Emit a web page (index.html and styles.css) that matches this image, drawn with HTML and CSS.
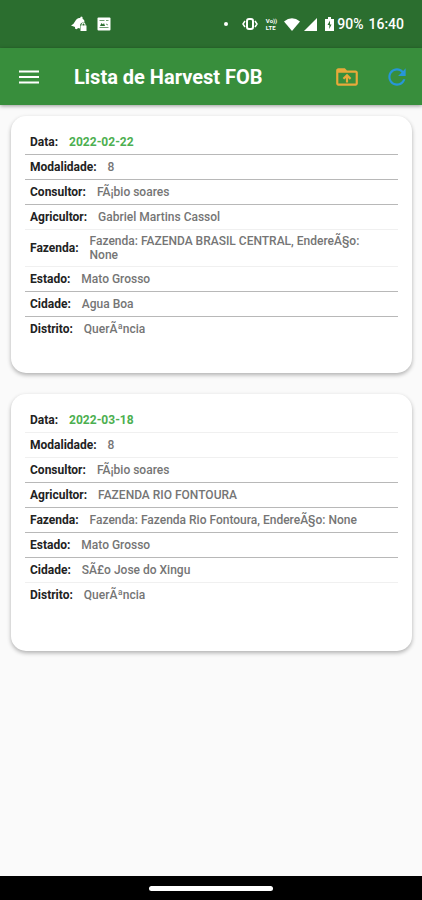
FILE: index.html
```html
<!DOCTYPE html>
<html lang="pt-BR">
<head>
<meta charset="utf-8">
<meta name="viewport" content="width=device-width, initial-scale=1">
<title>Lista de Harvest FOB</title>
<link rel="stylesheet" href="styles.css">
</head>
<body>
<div class="status">
  <div class="status-group">
    <svg width="16" height="16" viewBox="0 0 16 16" fill="#fff"><path d="M0 9.500Q3 8 4 5.500Q6 1.500 9 2l1-1.500 1.500.5v1.500Q14 4 13.500 6.500h-2Q9 7 9 10v2.500L7 12q-1 2-3 .5L4 11z"/><path d="M10.500 9.500V8.500a2 2 0 0 1 4 0v1h1V15H9.500V9.500zm1 0h2v-1a1 1 0 0 0-2 0z" fill-rule="evenodd"/></svg>
    <svg width="14" height="14" viewBox="0 0 14 14"><rect x="0.500" y="0.500" width="13" height="13" rx="1" fill="#fff"/><path d="M2.500 3.500h5M9 3.500h2.500M9 7l2 1M2.500 10.500h9" fill="none" stroke="#6f9f71"/><path d="M3 9l1.500-3L6 7.500 7 6l1 3z" fill="#2b6e2f"/></svg>
  </div>
  <div class="status-group status-end">
    <svg class="dot" width="4" height="4" viewBox="0 0 4 4"><circle cx="2" cy="2" r="2" fill="#fff"/></svg>
    <svg class="vibrate" width="16" height="14" viewBox="0 0 16 14" fill="none" stroke="#fff"><rect x="5" y="2" width="6" height="10" rx="2" stroke-width="2"/><path d="M3 4L1 7l2 3M13 4l2 3-2 3" stroke-width="1.500"/></svg>
    <span class="volte"><span>Vo))</span><span>LTE</span></span>
    <svg class="wifi" width="16" height="13" viewBox="0 0 16 13"><path d="M0 3.500Q8-3 16 3.500L8 13z" fill="#fff"/></svg>
    <svg class="signal" width="13" height="13" viewBox="0 0 13 13"><path d="M13 0v13H0z" fill="#fff"/></svg>
    <svg class="battery" width="9" height="14" viewBox="0 0 9 14"><path d="M3 0h3v2h3v12H0V2h3z" fill="#fff"/><path d="M5 3.500L2.500 8h1.800v4L6.500 7.500H5z" fill="#2b6e2f"/></svg>
    <span>90%</span>
    <span class="clock">16:40</span>
  </div>
</div>
<header class="appbar">
  <button class="icon-button" type="button" aria-label="Menu"><svg width="20" height="14" viewBox="0 0 20 14"><path d="M0 1.500h20M0 7h20M0 12.500h20" stroke="#fff" stroke-width="2"/></svg></button>
  <h1>Lista de Harvest FOB</h1>
  <button class="icon-button" type="button" aria-label="Enviar"><svg width="26" height="26" viewBox="0 0 24 24" fill="#e9a93a"><path d="M20 6h-8l-2-2H4c-1.100 0-2 .9-2 2v12c0 1.100.9 2 2 2h16c1.100 0 2-.9 2-2V8c0-1.100-.9-2-2-2zm0 12H4V8h16zM8 13.010l1.410 1.410L11 12.840V17h2v-4.160l1.590 1.590L16 13.010 12.010 9z"/></svg></button>
  <button class="icon-button" type="button" aria-label="Atualizar"><svg width="26" height="26" viewBox="0 0 24 24" fill="#2796d8"><path d="M17.650 6.350C16.200 4.900 14.210 4 12 4c-4.420 0-7.990 3.580-7.990 8s3.570 8 7.990 8c3.730 0 6.840-2.550 7.730-6h-2.080c-.82 2.330-3.040 4-5.650 4-3.310 0-6-2.690-6-6s2.690-6 6-6c1.660 0 3.140.69 4.220 1.780L13 11h7V4z"/></svg></button>
</header>
<main class="list">
  <article class="card">
    <dl>
      <div class="row"><dt>Data:</dt><dd class="date">2022-02-22</dd></div>
      <div class="row"><dt>Modalidade:</dt><dd>8</dd></div>
      <div class="row"><dt>Consultor:</dt><dd>FÃ¡bio soares</dd></div>
      <div class="row faint"><dt>Agricultor:</dt><dd>Gabriel Martins Cassol</dd></div>
      <div class="row faint"><dt>Fazenda:</dt><dd>Fazenda: FAZENDA BRASIL CENTRAL, EndereÃ§o: None</dd></div>
      <div class="row"><dt>Estado:</dt><dd>Mato Grosso</dd></div>
      <div class="row"><dt>Cidade:</dt><dd>Agua Boa</dd></div>
      <div class="row"><dt>Distrito:</dt><dd>QuerÃªncia</dd></div>
    </dl>
  </article>
  <article class="card">
    <dl>
      <div class="row faint"><dt>Data:</dt><dd class="date">2022-03-18</dd></div>
      <div class="row faint"><dt>Modalidade:</dt><dd>8</dd></div>
      <div class="row"><dt>Consultor:</dt><dd>FÃ¡bio soares</dd></div>
      <div class="row"><dt>Agricultor:</dt><dd>FAZENDA RIO FONTOURA</dd></div>
      <div class="row"><dt>Fazenda:</dt><dd>Fazenda: Fazenda Rio Fontoura, EndereÃ§o: None</dd></div>
      <div class="row"><dt>Estado:</dt><dd>Mato Grosso</dd></div>
      <div class="row faint"><dt>Cidade:</dt><dd>SÃ£o Jose do Xingu</dd></div>
      <div class="row"><dt>Distrito:</dt><dd>QuerÃªncia</dd></div>
    </dl>
  </article>
</main>
<footer class="navbar"><span class="handle"></span></footer>
</body>
</html>
```
FILE: styles.css
```css
* { box-sizing: border-box; }
body {
  margin: 0;
  min-height: 100vh;
  display: flex;
  flex-direction: column;
  background: #fafafa;
  font-family: Roboto, sans-serif;
}
svg { display: block; flex: none; }
.status {
  display: flex;
  align-items: center;
  justify-content: space-between;
  height: 48px;
  padding: 0 18px 0 71px;
  background: #2b6e2f;
  color: #fff;
  font-size: 14px;
  font-weight: 500;
}
.status-group { display: flex; align-items: center; gap: 10px; }
.status-end { gap: 0; }
.dot { margin-right: 14px; }
.vibrate { margin-right: 8px; }
.volte {
  display: flex;
  flex-direction: column;
  margin-right: 7px;
  font-size: 6px;
  line-height: 7px;
  font-weight: 700;
}
.wifi { margin-right: 4px; }
.signal { margin-right: 8px; }
.battery { margin-right: 3px; }
.clock { margin-left: 5px; }
.appbar {
  display: flex;
  align-items: center;
  height: 57px;
  padding: 0 5px 0 4px;
  background: #388e3c;
  box-shadow: 0 1px 4px rgba(0, 0, 0, .4);
}
.icon-button {
  display: grid;
  place-items: center;
  width: 50px;
  height: 48px;
  padding: 0;
  border: 0;
  background: none;
}
.appbar .icon-button:last-child { margin-right: -5px; }
h1 {
  flex: 1;
  margin: 0 0 0 20px;
  color: #fff;
  font-size: 20px;
  font-weight: 700;
}
.list {
  flex: 1;
  display: flex;
  flex-direction: column;
  gap: 21px;
  padding: 11px 10px 11px 11px;
}
.card {
  min-height: 257px;
  padding: 14px 14px 31px;
  border-radius: 15px;
  background: #fff;
  box-shadow: 0 2px 4px rgba(0, 0, 0, .3);
}
dl { margin: 0; }
.row {
  display: flex;
  align-items: center;
  gap: 11px;
  min-height: 25px;
  padding: 4px 16px 4px 5px;
  border-bottom: 1px solid #b8b8b8;
  font-size: 12px;
  line-height: 14px;
}
.faint { border-color: #f0f0f0; }
.row:last-child { border-color: transparent; }
dt { color: #222; font-weight: 700; }
dd { margin: 0; color: #757575; font-weight: 500; }
.date { color: #4caf50; font-weight: 700; }
.navbar {
  display: grid;
  place-items: center;
  height: 24px;
  background: #000;
}
.handle { width: 124px; height: 5px; border-radius: 3px; background: #fff; }
```
